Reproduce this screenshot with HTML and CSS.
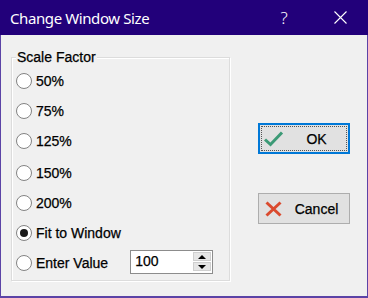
FILE: index.html
```html
<!DOCTYPE html>
<html lang="en">
<head>
    <meta charset="UTF-8">
    <title>Change Window Size</title>
    <link rel="stylesheet" href="styles.css">
</head>
<body>
    <div class="window">
        <div class="titlebar">
            <span class="title">Change Window Size</span>
            <span class="caption-btn help">?</span>
            <span class="caption-btn close">
                <svg width="13" height="13" viewBox="0 0 13 13"><path d="M0.5 0.5 L12.5 12.5 M12.5 0.5 L0.5 12.5" stroke="#fff" stroke-width="1.1" fill="none"/></svg>
            </span>
        </div>

        <div class="content">
            <fieldset class="group">
                <legend>Scale Factor</legend>
                <div class="option"><span class="radio"></span>50%</div>
                <div class="option"><span class="radio"></span>75%</div>
                <div class="option"><span class="radio"></span>125%</div>
                <div class="option shift"><span class="radio"></span>150%</div>
                <div class="option"><span class="radio"></span>200%</div>
                <div class="option checked"><span class="radio"></span>Fit to Window</div>
                <div class="option">
                    <span class="radio"></span>
                    <span>Enter Value</span>
                    <div class="spin">
                        <span class="spin-value">100</span>
                        <div class="spin-buttons">
                            <span class="spin-btn"><span class="arrow-up"></span></span>
                            <span class="spin-btn"><span class="arrow-down"></span></span>
                        </div>
                    </div>
                </div>
            </fieldset>

            <div class="buttons">
                <button class="btn default">
                    <span class="btn-icon">
                        <svg width="20" height="16" viewBox="0 0 20 16"><path d="M1 8.5 L6.5 13.5 L18 1.5" stroke="#3c9a76" stroke-width="3" fill="none"/></svg>
                    </span>
                    <span class="btn-label">OK</span>
                </button>
                <button class="btn">
                    <span class="btn-icon">
                        <svg width="20" height="16" viewBox="0 0 20 16"><path d="M2.5 1.5 L16.5 14.5 M16.5 1.5 L2.5 14.5" stroke="#da4a2e" stroke-width="3" fill="none"/></svg>
                    </span>
                    <span class="btn-label">Cancel</span>
                </button>
            </div>
        </div>
    </div>
</body>
</html>
```

FILE: styles.css
```css
body { margin: 0; font-family: "Liberation Sans", Arial, sans-serif; font-size: 14px; color: #000; }
.window { width: 368px; height: 298px; background: #f0f0f0; }

.titlebar { height: 35px; background: #22007a; color: #fff; display: flex; align-items: center; }
.title { flex: 1; padding-left: 10px; font-family: "Noto Sans", sans-serif; font-size: 15px; letter-spacing: -0.4px; }
.caption-btn { width: 56px; height: 35px; display: flex; align-items: center; justify-content: center; }
.help { font-family: "Noto Sans", sans-serif; font-size: 17px; font-weight: 300; }

.content {
    display: flex;
    height: 263px;
    box-sizing: border-box;
    border: 1px solid #5b43a6;
    border-top: none;
    border-bottom-width: 2px;
    padding: 14px 0 0 10px;
    -webkit-text-stroke: 0.25px #000;
}

.group {
    margin: 0;
    padding: 0 0 0 4px;
    width: 219px;
    height: 232px;
    box-sizing: border-box;
    border: 1px solid #dcdcdc;
    box-shadow: 1px 1px 0 #fff, inset 1px 1px 0 #fff;
}
.group legend { padding: 0 1px; line-height: 17px; background: #f0f0f0; }

.option { display: flex; align-items: center; gap: 4px; height: 30px; }
.option.shift { margin-top: 2px; }
.radio {
    width: 16px;
    height: 16px;
    box-sizing: border-box;
    border: 1px solid #838383;
    border-radius: 50%;
    background: #fff;
    display: flex;
    align-items: center;
    justify-content: center;
}
.checked .radio::after { content: ""; width: 8px; height: 8px; border-radius: 50%; background: #1a1a1a; }

.spin {
    margin-left: 18px;
    margin-top: -3px;
    width: 83px;
    height: 24px;
    box-sizing: border-box;
    border: 1px solid #8c8c8c;
    background: #fff;
    display: flex;
    align-items: center;
    padding-left: 4px;
}
.spin-value { flex: 1; align-self: flex-start; padding-top: 2px; }
.spin-buttons { display: flex; flex-direction: column; gap: 1px; width: 18px; height: 19px; margin-right: 1px; }
.spin-btn {
    flex: 1;
    display: flex;
    align-items: center;
    justify-content: center;
    background: #e6e6e6;
    border: 1px solid #cfcfcf;
}
.arrow-up { border: 4px solid transparent; border-top: none; border-bottom: 4px solid #000; }
.arrow-down { border: 4px solid transparent; border-bottom: none; border-top: 4px solid #000; }

.buttons { display: flex; flex-direction: column; gap: 39px; margin-left: 28px; padding-top: 74px; }
.btn {
    position: relative;
    width: 92px;
    height: 31px;
    box-sizing: border-box;
    display: flex;
    align-items: center;
    padding: 0 0 0 5px;
    border: 1px solid #adadad;
    background: #e1e1e1;
    font: inherit;
    color: #000;
    -webkit-text-stroke: inherit;
}
.btn.default { border-color: #0078d7; box-shadow: inset 0 0 0 1px #0078d7; }
.btn.default::after { content: ""; position: absolute; inset: 2px; border: 1px dotted #555; }
.btn-icon { width: 20px; height: 16px; display: flex; }
.btn-label { flex: 1; text-align: center; }
```
